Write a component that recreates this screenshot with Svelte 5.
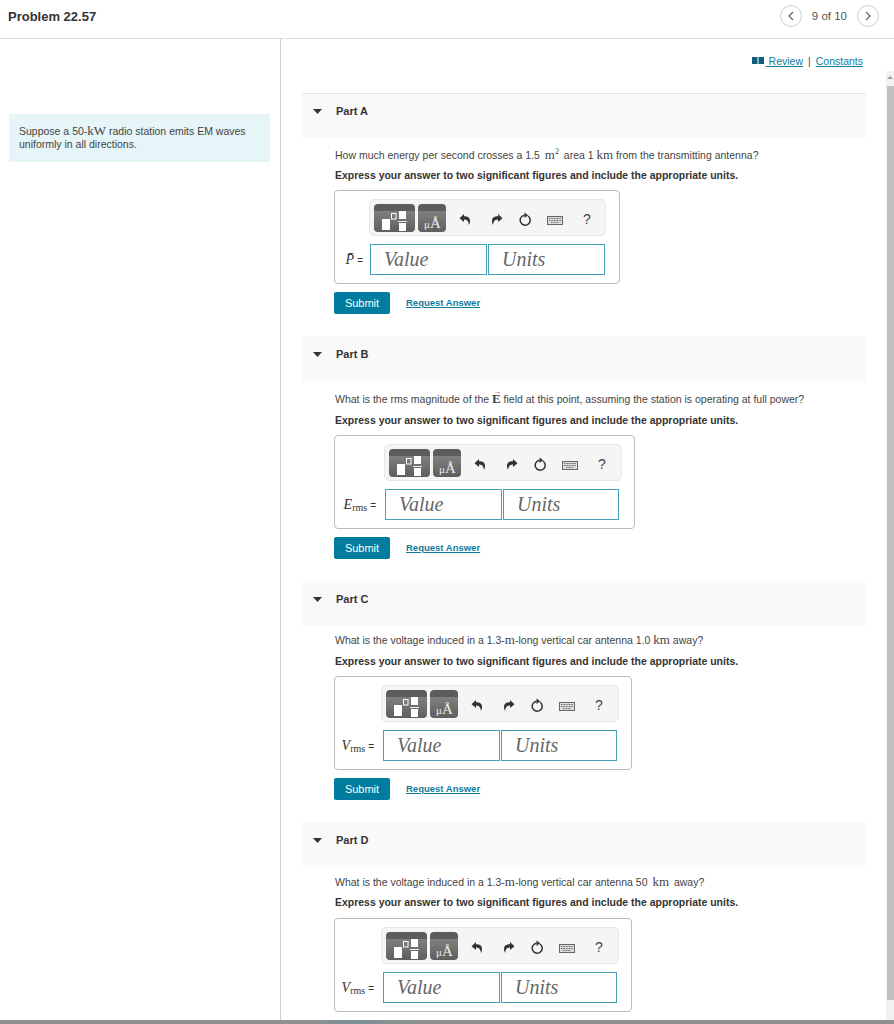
<script>
  const parts = [
    { name: 'Part A', q: 'a', label: 'P̄', rms: false },
    { name: 'Part B', q: 'b', label: 'E', rms: true },
    { name: 'Part C', q: 'c', label: 'V', rms: true },
    { name: 'Part D', q: 'd', label: 'V', rms: true }
  ];
</script>

<div class="page">
  <header class="top">
    <h1>Problem 22.57</h1>
    <nav class="pager">
      <span class="circle"><svg width="8" height="10" viewBox="0 0 8 10"><path d="M6 1 2 5l4 4" fill="none" stroke="#666" stroke-width="1.2"/></svg></span>
      <span class="count">9 of 10</span>
      <span class="circle"><svg width="8" height="10" viewBox="0 0 8 10"><path d="M2 1l4 4-4 4" fill="none" stroke="#666" stroke-width="1.2"/></svg></span>
    </nav>
  </header>

  <div class="columns">
    <aside class="left">
      <div class="intro">Suppose a 50-<span class="m">kW</span> radio station emits EM waves uniformly in all directions.</div>
    </aside>

    <main class="right">
      <div class="links">
        <svg class="book" width="12" height="7" viewBox="0 0 12 7"><path d="M0 0h5.500v7H0zM6.500 0H12v7H6.500z" fill="#0d5f7d"/></svg>
        <a href="#r">&nbsp;Review</a><span class="sep">|</span><a href="#c">Constants</a>
      </div>

      {#each parts as p}
        <section class="part part-{p.q}">
          <div class="part-head">
            <svg class="caret" width="9" height="5" viewBox="0 0 9 5"><path d="M0 0h9L4.500 5z" fill="#333"/></svg>
            <span>{p.name}</span>
          </div>
          <div class="body">
            <p class="q">
              {#if p.q === 'a'}
                How much energy per second crosses a 1.5 <span class="m sp">m<sup>2</sup></span> area 1 <span class="m">km</span> from the transmitting antenna?
              {:else if p.q === 'b'}
                What is the rms magnitude of the <span class="m vec"><b>E</b></span> field at this point, assuming the station is operating at full power?
              {:else if p.q === 'c'}
                What is the voltage induced in a 1.3-<span class="m">m</span>-long vertical car antenna 1.0 <span class="m">km</span> away?
              {:else}
                What is the voltage induced in a 1.3-<span class="m">m</span>-long vertical car antenna 50 <span class="m sp">km</span> away?
              {/if}
            </p>
            <p class="hint">Express your answer to two significant figures and include the appropriate units.</p>

            <div class="answer">
              <div class="toolbar">
                <span class="tpl wide">
                  <svg width="41" height="28" viewBox="0 0 41 28">
                    <rect x="8" y="15" width="8" height="11" fill="#fff"/>
                    <rect x="17.500" y="9.500" width="4.500" height="5.500" fill="none" stroke="#fff"/>
                    <rect x="25" y="7" width="7" height="8" fill="#fff"/>
                    <rect x="24" y="17" width="9" height="1" fill="#eee"/>
                    <rect x="25" y="19" width="7" height="8" fill="#fff"/>
                  </svg>
                </span>
                <span class="tpl narrow"><span class="mu">μ</span><span class="ang">Å</span></span>
                <svg class="t-undo" width="12" height="12" viewBox="0 0 12 12"><path d="M5 1 .5 5.200 5 9V6.600c2 0 3.400.6 4.300 2.600.3.7.5 1.600.6 2.800 1.300-2.400 1.600-5 .4-6.800C9.300 3.800 7.400 3.300 5 3.300z" fill="#333"/></svg>
                <svg class="t-redo" width="12" height="12" viewBox="0 0 12 12"><path d="M7 1l4.500 4.200L7 9V6.600c-2 0-3.400.6-4.300 2.600-.3.7-.5 1.600-.6 2.800C.8 9.600.5 7 1.700 5.200 2.700 3.800 4.600 3.300 7 3.300z" fill="#333"/></svg>
                <svg class="t-reload" width="13" height="15" viewBox="0 0 13 15"><path d="M5.500 3.200A5 5 0 1 0 9 4" fill="none" stroke="#333" stroke-width="1.500"/><path d="M5.500.5 9.200 3.300 5.500 5.900z" fill="#333"/></svg>
                <svg class="t-keys" width="16" height="9" viewBox="0 0 16 9"><rect x=".5" y=".5" width="15" height="8" fill="#ddd" stroke="#666"/><path d="M2 2.500h12M2 4.500h12M4 6.500h8" stroke="#666" stroke-dasharray="1 .6"/></svg>
                <span class="help">?</span>
              </div>
              <div class="field-row">
                <div class="label">
                  <span class="var">{p.label}</span>{#if p.rms}<span class="rms">rms</span>{/if}<span class="eq">=</span>
                </div>
                <div class="input first">Value</div>
                <div class="input second">Units</div>
              </div>
            </div>

            {#if p.q !== 'd'}
              <div class="actions">
                <button type="button">Submit</button>
                <a href="#a" class="req">Request Answer</a>
              </div>
            {/if}
          </div>
        </section>
      {/each}
    </main>
  </div>

  <div class="scrollbar"><span class="arrow"></span><span class="thumb"></span></div>
  <div class="bottom"></div>
</div>

<style>
  :global(body) {
    margin: 0;
    background: #fff;
    overflow: hidden;
  }
  .page {
    position: relative;
    width: 894px;
    height: 1024px;
    overflow: hidden;
    font-family: "Liberation Sans", Arial, sans-serif;
    color: #333;
  }
  .top {
    height: 38px;
    border-bottom: 1px solid #ddd;
    display: flex;
    align-items: center;
    justify-content: space-between;
    padding: 0 15px 0 8px;
  }
  h1 {
    margin: -5px 0 0;
    font-size: 13px;
    font-weight: 700;
    color: #333;
  }
  .pager {
    display: flex;
    align-items: center;
    gap: 10px;
    font-size: 11.500px;
    color: #555;
    margin-top: -6px;
  }
  .circle {
    width: 22px;
    height: 22px;
    border: 1px solid #ccc;
    border-radius: 50%;
    display: flex;
    align-items: center;
    justify-content: center;
    box-sizing: border-box;
  }
  .columns {
    display: flex;
    height: 985px;
  }
  .left {
    width: 261px;
    flex: none;
    border-right: 1px solid #c3d3df;
    padding: 75px 10px 0 9px;
  }
  .intro {
    background: #e6f5f7;
    padding: 10px 10px 10px;
    font-size: 10.500px;
    line-height: 13px;
    height: 28px;
    color: #444;
  }
  .m {
    font-family: "Liberation Serif", serif;
    font-size: 13px;
  }
  .sp { margin: 0 2px; }
  .m sup { font-size: 8px; line-height: 0; }
  .vec { position: relative; display: inline-block; line-height: 12px; }
  .vec::before {
    content: "→";
    position: absolute;
    top: -7px;
    left: 1px;
    font-size: 8px;
    font-weight: 700;
  }
  .right {
    width: 564px;
    padding: 0 28px 0 21px;
  }
  .links {
    height: 54px;
    display: flex;
    justify-content: flex-end;
    align-items: flex-start;
    padding: 15px 3px 0 0;
    box-sizing: border-box;
    font-size: 10.500px;
    line-height: 14px;
  }
  .book { margin: 3px 2px 0 0; }
  a { color: #0f7c9c; }
  .sep { margin: 0 5px 0 5px; color: #444; }
  .part-head {
    height: 45px;
    background: #f9f9f9;
    display: flex;
    align-items: flex-start;
    font-size: 11px;
    font-weight: 700;
    padding-top: 12px;
    box-sizing: border-box;
  }
  .part-a .part-head { border-top: 1px solid #e5e5e5; padding-top: 11px; }
  .caret { margin: 4px 0 0 11px; }
  .part-head span { margin-left: 14px; line-height: 13px; }
  .body { padding-left: 32px; }
  .q {
    margin: 0;
    padding: 11px 0 0 1px;
    font-size: 10.500px;
    line-height: 14px;
    height: 14px;
    color: #444;
    white-space: nowrap;
  }
  .hint {
    margin: 0;
    padding: 7px 0 0 1px;
    font-size: 10.480px;
    line-height: 14px;
    font-weight: 700;
    white-space: nowrap;
  }
  .part-a .q { padding-top: 10px; }
  .part-c .q { padding-top: 7px; }
  .part-d .q { padding-top: 8px; }
  .part-b .hint, .part-c .hint { padding-top: 8px; }

  .answer {
    margin-top: 7px;
    border: 1px solid #bbb;
    border-radius: 4px;
    height: 94px;
    box-sizing: border-box;
    padding-top: 8px;
  }
  .part-a .answer { width: 286px; }
  .part-b .answer { width: 301px; }
  .part-c .answer { width: 298px; }
  .part-d .answer { width: 298px; margin-top: 8px; }

  .toolbar {
    width: 238px;
    height: 37px;
    background: #f5f5f5;
    border: 1px solid #e8e8e8;
    border-radius: 5px;
    box-sizing: border-box;
    display: flex;
    align-items: center;
    padding-left: 4px;
    gap: 3px;
  }
  .part-a .toolbar { margin-left: 34px; width: 237px; }
  .part-b .toolbar { margin-left: 49px; }
  .part-c .toolbar, .part-d .toolbar { margin-left: 46px; }

  .tpl {
    height: 28px;
    border-radius: 4px;
    background: linear-gradient(#5c5c5c 0 7px, #808080 7px, #5e5e5e);
    display: block;
    position: relative;
    overflow: hidden;
    flex: none;
  }
  .tpl svg { display: block; }
  .wide { width: 41px; }
  .narrow {
    width: 28px;
    color: #eee;
    font-family: "Liberation Serif", serif;
    line-height: 1;
  }
  .mu { position: absolute; left: 6px; bottom: 2px; font-size: 11px; }
  .ang { position: absolute; left: 12px; bottom: 1px; font-size: 15px; }

  .t-undo { margin: 3px 0 0 10px; flex: none; }
  .t-redo { margin: 3px 0 0 17px; flex: none; }
  .t-reload { margin: 3px 0 0 13px; flex: none; }
  .t-keys { margin: 5px 0 0 12px; flex: none; }
  .help { margin: 2px 0 0 17px; font-size: 14px; color: #444; }

  .field-row {
    display: flex;
    align-items: center;
    margin-top: 8px;
  }
  .label {
    flex: none;
    text-align: right;
    font-family: "Liberation Serif", serif;
    font-size: 14px;
    box-sizing: border-box;
    padding-right: 9px;
    white-space: nowrap;
  }
  .part-a .label { width: 35px; padding-right: 7px; }
  .part-b .label { width: 50px; }
  .part-c .label, .part-d .label { width: 48px; }
  .var { font-style: italic; }
  .rms { font-size: 10px; vertical-align: -2px; }
  .eq { font: 10px "Liberation Sans", Arial, sans-serif; margin-left: 3px; }
  .input {
    height: 31px;
    border: 1px solid #45a3b9;
    box-sizing: border-box;
    font-family: "Liberation Serif", serif;
    font-style: italic;
    font-size: 20px;
    color: #666;
    padding-left: 13px;
    line-height: 29px;
  }
  .first { width: 117px; margin-right: 1px; }
  .second { width: 116px; }
  .part-a .second { width: 117px; }

  .actions {
    display: flex;
    align-items: center;
    margin: 8px 0 22px;
    height: 22px;
  }
  button {
    width: 56px;
    height: 22px;
    background: #007c9e;
    color: #fff;
    border: 0;
    border-radius: 2px;
    font: 11px "Liberation Sans", Arial, sans-serif;
    padding: 0;
  }
  .req {
    margin: -2px 0 0 16px;
    font-size: 9.500px;
    font-weight: 700;
  }
  .scrollbar {
    position: absolute;
    right: 0;
    top: 71px;
    bottom: 4px;
    width: 8px;
    background: #f1f1f1;
  }
  .arrow {
    display: block;
    margin: 5px auto 0;
    width: 0;
    border-left: 3px solid transparent;
    border-right: 3px solid transparent;
    border-bottom: 3px solid #999;
  }
  .thumb {
    position: absolute;
    left: 1px;
    right: 0;
    top: 15px;
    bottom: 20px;
    background: #c1c1c1;
  }
  .bottom {
    position: absolute;
    left: 0;
    right: 0;
    bottom: 0;
    height: 4px;
    background: linear-gradient(90deg, #909090 310px, #7b8f94 350px, #8b9191 400px, #909090 470px);
  }
</style>
